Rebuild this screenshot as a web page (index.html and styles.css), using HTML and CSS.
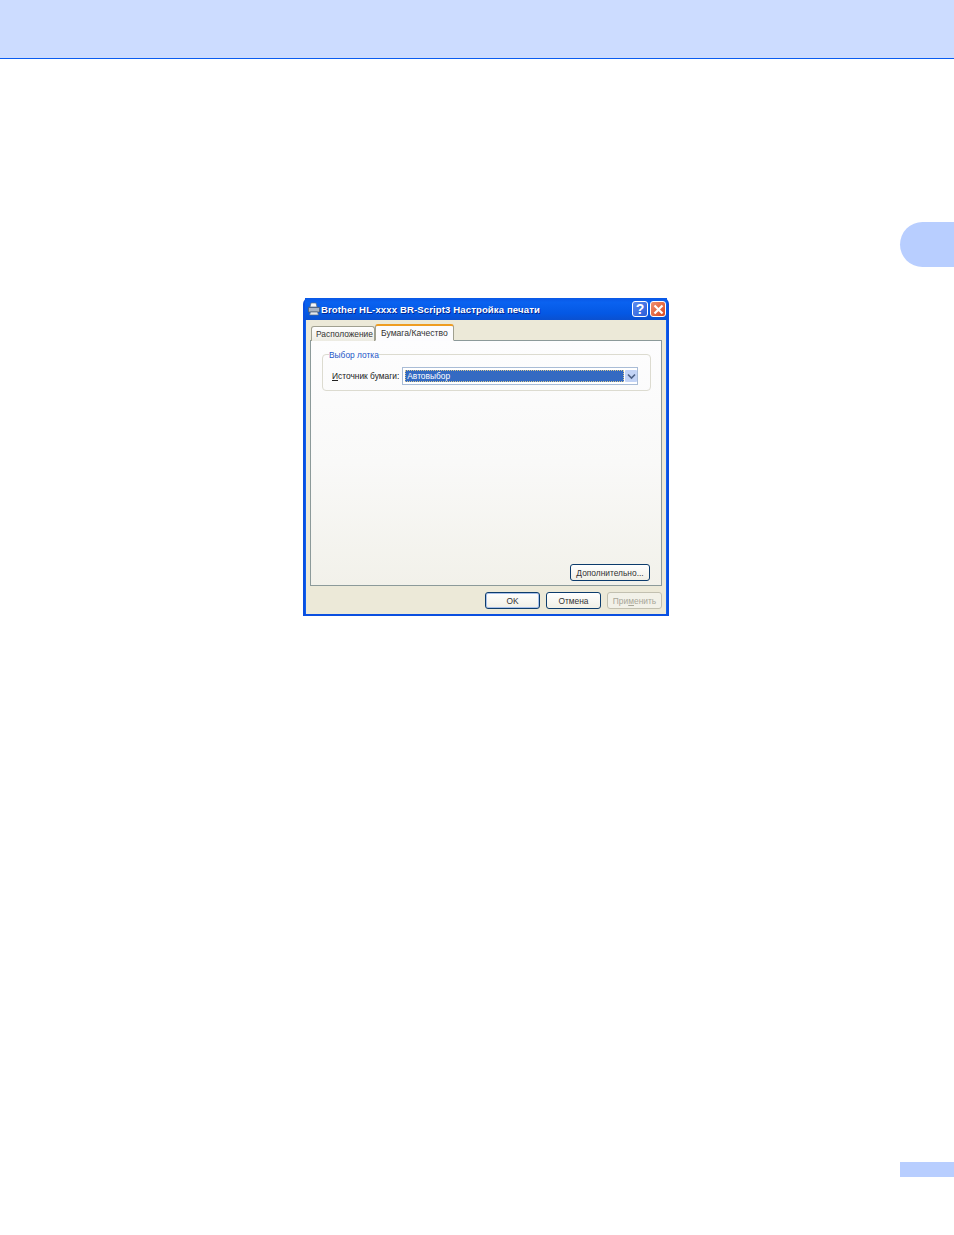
FILE: index.html
```html
<!DOCTYPE html>
<html lang="ru">
<head>
  <meta charset="UTF-8">
  <meta name="viewport" content="width=device-width, initial-scale=1.0">
  <title>Brother HL-xxxx BR-Script3 Настройка печати</title>
  <link rel="stylesheet" href="styles.css">
</head>
<body>
  <header class="page-head"></header>
  <div class="chapter-tab"></div>

  <section class="dialog">
    <div class="titlebar">
      <svg class="title-icon" width="14" height="14" viewBox="0 0 14 14">
        <path d="M4 1h5l1 4H3z" fill="#f4f6fa" stroke="#5a6a80" stroke-width="0.7"/>
        <path d="M1.5 5.5h11v4.5h-11z" fill="#a9b4c4" stroke="#4a5668" stroke-width="0.7"/>
        <path d="M3.5 10h7l1 3h-9z" fill="#e4e8ee" stroke="#5a6a80" stroke-width="0.7"/>
      </svg>
      <span class="title-text">Brother HL-xxxx BR-Script3 Настройка печати</span>
      <button class="cap-btn cap-help">?</button>
      <button class="cap-btn cap-close">
        <svg width="11" height="11" viewBox="0 0 11 11">
          <path d="M1.5 1.5l8 8M9.5 1.5l-8 8" stroke="#fff" stroke-width="2.2" fill="none"/>
        </svg>
      </button>
    </div>

    <div class="dialog-body">
      <div class="tabs">
        <div class="tab">Расположение</div>
        <div class="tab tab-active">Бумага/Качество</div>
      </div>

      <div class="panel">
        <fieldset class="group">
          <legend>Выбор лотка</legend>
          <div class="field">
            <label><u>И</u>сточник бумаги:</label>
            <div class="combo">
              <span class="combo-value"><span>Автовыбор</span></span>
              <span class="combo-arrow">
                <svg width="9" height="7" viewBox="0 0 9 7">
                  <path d="M1 1.5l3.5 3.5L8 1.5" stroke="#4d6185" stroke-width="1.6" fill="none"/>
                </svg>
              </span>
            </div>
          </div>
        </fieldset>
        <div class="panel-actions">
          <button class="btn btn-more"><u>Д</u>ополнительно...</button>
        </div>
      </div>

      <div class="dialog-actions">
        <button class="btn btn-default">OK</button>
        <button class="btn">Отмена</button>
        <button class="btn btn-disabled">При<u>м</u>енить</button>
      </div>
    </div>
  </section>

  <div class="page-foot"></div>
</body>
</html>
```

FILE: styles.css
```css
*, *::before, *::after { box-sizing: border-box; }
html, body { margin: 0; padding: 0; }
body {
  height: 1235px;
  display: flex;
  flex-direction: column;
  background: #fff;
  font-family: "Liberation Sans", Arial, sans-serif;
  font-size: 8.4px;
  color: #333;
  overflow: hidden;
}
u { text-decoration: underline; }

/* strony */
.page-head { height: 59px; flex: none; background: #ccdcff; border-bottom: 1px solid #0a5cf0; }
.chapter-tab { width: 54px; height: 45px; flex: none; margin: 163px 0 0 auto; background: #b8ceff; border-radius: 22.5px 0 0 22.5px; }
.page-foot { width: 54px; height: 15px; flex: none; margin: auto 0 58px auto; background: #b8ceff; }

/* okno */
.dialog {
  width: 366px;
  height: 318px;
  flex: none;
  margin: 31px 0 0 303px;
  display: flex;
  flex-direction: column;
  background: #0a4fe0;
  border-radius: 6px 6px 0 0;
  padding: 0 2px 2px;
}
.titlebar {
  height: 22px;
  flex: none;
  display: flex;
  align-items: center;
  padding: 0 1px 0 2px;
  background: linear-gradient(180deg, #0a58e6 0%, #0a62f0 20%, #0458e4 70%, #0a50d0 100%);
  color: #fff;
}
.title-icon { flex: none; }
.title-text { flex: 1; font-size: 9.6px; font-weight: bold; letter-spacing: 0.1px; text-shadow: 1px 1px 0 #06258c; white-space: nowrap; }
.cap-btn {
  width: 16px;
  height: 16px;
  padding: 0;
  margin-left: 2px;
  display: flex;
  align-items: center;
  justify-content: center;
  border: 1px solid #fff;
  border-radius: 3px;
  color: #fff;
  font: bold 14px "Liberation Sans", Arial, sans-serif;
}
.cap-help { background: linear-gradient(135deg, #5c8cf0, #2a5cd8); }
.cap-close { background: linear-gradient(135deg, #f09070, #d84820); }

.dialog-body {
  flex: 1;
  display: flex;
  flex-direction: column;
  background: #ece9d8;
  padding: 0 4px;
  border-left: 1px solid #0e60f0;
  border-right: 1px solid #0e60f0;
}

/* zakładki */
.tabs { height: 21px; flex: none; display: flex; align-items: flex-end; padding-left: 1px; margin-bottom: -1px; position: relative; z-index: 1; }
.tab {
  width: 64px;
  height: 15px;
  padding: 2px 0 0 4px;
  border: 1px solid #a0a090;
  border-bottom: none;
  border-radius: 3px 3px 0 0;
  background: linear-gradient(180deg, #fff, #ecebe2);
  color: #333;
  white-space: nowrap;
}
.tab-active {
  width: 79px;
  height: 17px;
  padding: 2px 0 0 5px;
  font-size: 8.6px;
  background: #fcfcfe;
  border-color: #a0a090;
  border-top: 2px solid #ee9d22;
  border-bottom: 1px solid #fcfcfe;
}

.panel {
  width: 352px;
  height: 246px;
  flex: none;
  display: flex;
  flex-direction: column;
  border: 1px solid #8c9a9a;
  background: linear-gradient(180deg, #fdfdfe 0%, #f9f9f8 50%, #f2f1ea 100%);
  padding: 7px 10px 4px 11px;
}
.group {
  height: 43px;
  margin: 0;
  padding: 0 12px 0 9px;
  border: 1px solid #dcdbd0;
  border-radius: 4px;
}
.group legend { padding: 2px 0 0; margin-left: -3px; color: #2458c8; line-height: 10px; }
.field { display: flex; align-items: center; gap: 3px; margin-top: 7px; }
.field label { white-space: nowrap; color: #222; }

.combo {
  flex: 1;
  height: 18px;
  display: flex;
  padding: 2px 0 2px 2px;
  gap: 1px;
  background: #fff;
  border: 1px solid #a9bcd6;
}
.combo-value { flex: 1; background: #346ac2; outline: 1px dotted #d8c890; outline-offset: -1px; color: #fff; padding: 0 2px; line-height: 12px; }
.combo-arrow { width: 12px; display: flex; align-items: center; justify-content: center; background: #c3d4f6; border-radius: 1px; }

.panel-actions { margin-top: auto; display: flex; justify-content: flex-end; padding-right: 1px; }

/* przyciski */
.btn {
  width: 55px;
  height: 17px;
  padding: 0;
  border: 1px solid #0c3c6c;
  border-radius: 3px;
  background: linear-gradient(180deg, #fff, #f0efe6);
  font: 8.4px "Liberation Sans", Arial, sans-serif;
  color: #333;
}
.btn-more { width: 80px; }
.btn-default { box-shadow: inset 0 0 0 1px #a8c0ea; }
.btn-disabled { border-color: #c2c0b0; color: #a8a698; background: #f2f1e8; }
.dialog-actions { display: flex; justify-content: flex-end; gap: 6px; margin-top: 6px; }
```
